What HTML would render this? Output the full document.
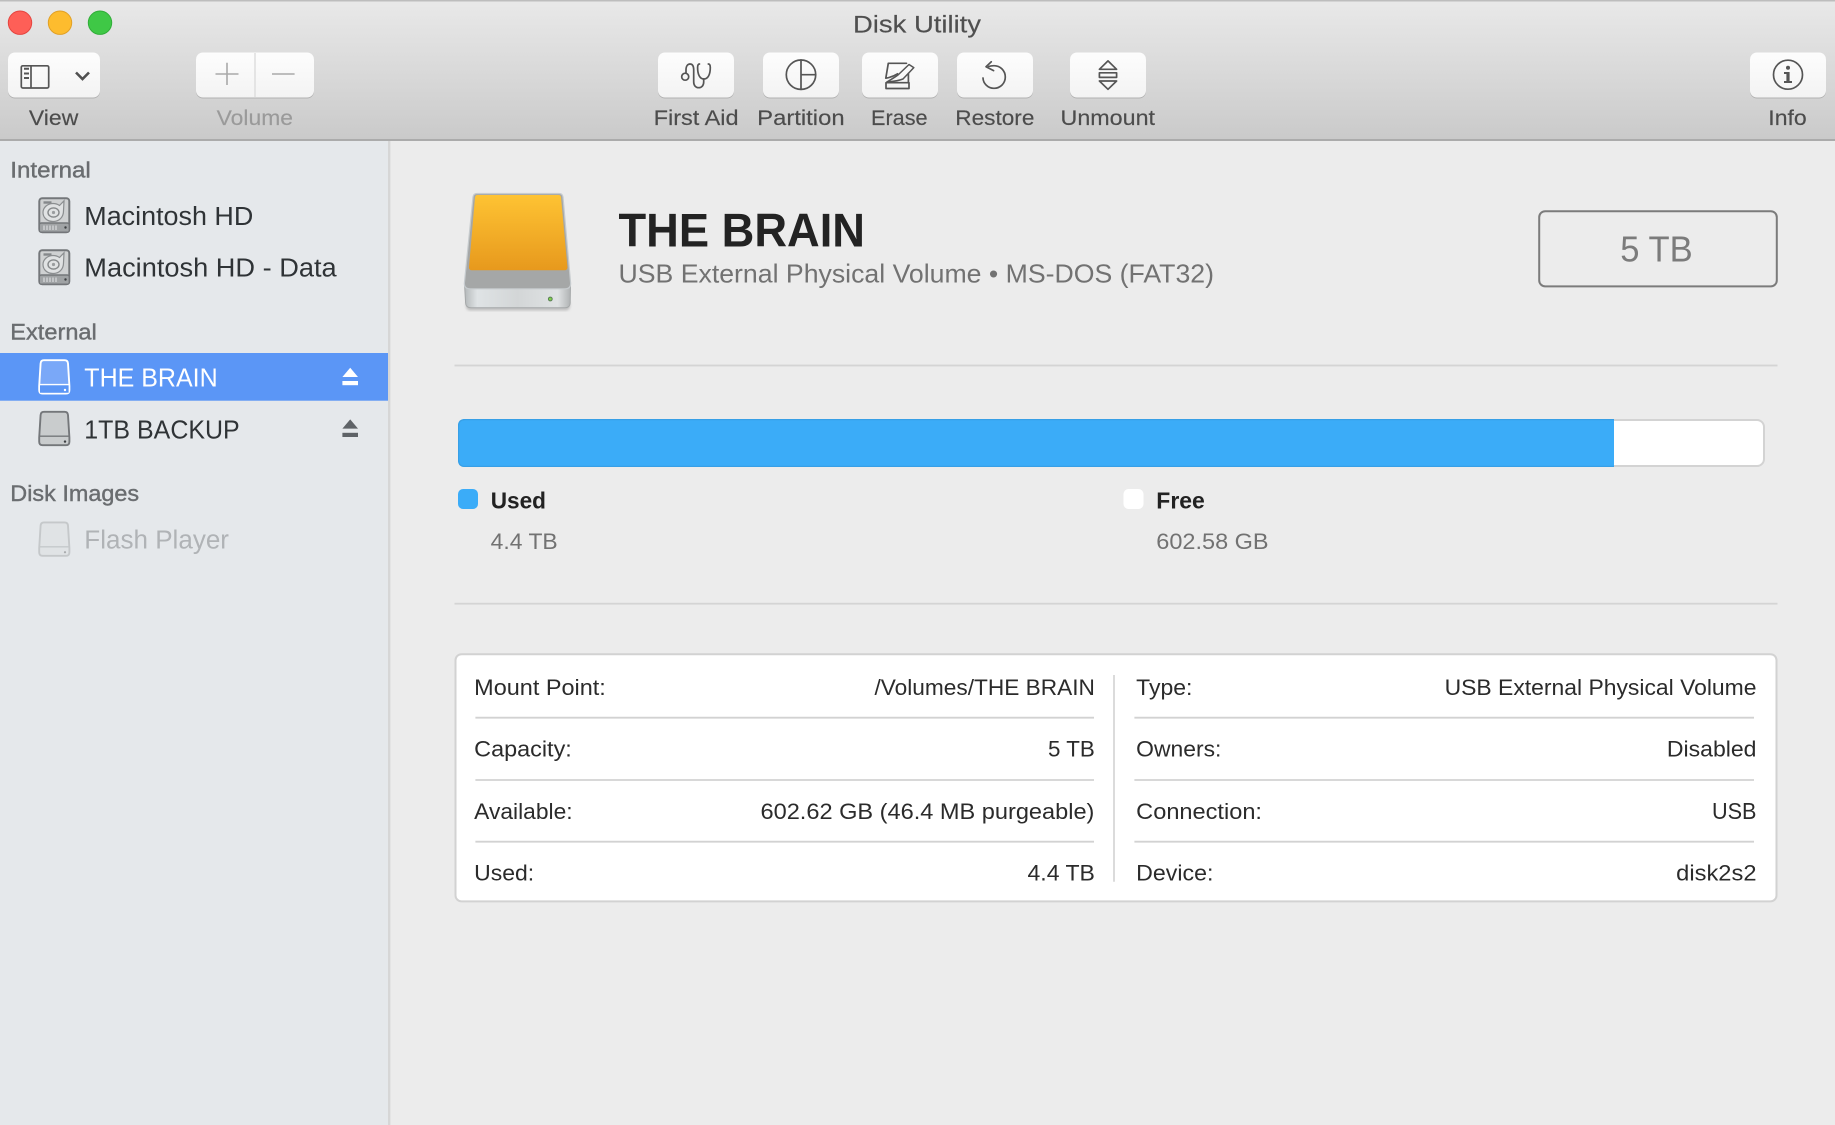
<!DOCTYPE html>
<html lang="en"><head><meta charset="utf-8"><title>Disk Utility</title>
<style>
html,body{margin:0;padding:0;width:1835px;height:1125px;overflow:hidden;background:#ececec}
svg{display:block}
text{font-family:"Liberation Sans",sans-serif;white-space:pre}
.tb{font-size:21.5px;fill:#4c4c4c;stroke:#4c4c4c;stroke-width:.15}
.grp{font-size:22px;fill:#6a6d70;stroke:#6a6d70;stroke-width:.4}
.it{font-size:25.5px;fill:#2f3336}
.row{font-size:22px;fill:#2b2b2b}
.ic{fill:none;stroke:#555;stroke-width:1.7;stroke-linejoin:round;stroke-linecap:round}
</style></head><body>
<svg width="1835" height="1125" viewBox="0 0 1835 1125" xmlns="http://www.w3.org/2000/svg">
<defs>
<linearGradient id="tbg" x1="0" y1="0" x2="0" y2="1"><stop offset="0" stop-color="#e9e9e9"/><stop offset="1" stop-color="#cacaca"/></linearGradient>
<linearGradient id="btn" x1="0" y1="0" x2="0" y2="1"><stop offset="0" stop-color="#fdfdfd"/><stop offset="1" stop-color="#f3f3f3"/></linearGradient>
<linearGradient id="org" x1="0" y1="0" x2="0" y2="1"><stop offset="0" stop-color="#fec333"/><stop offset="1" stop-color="#e7991d"/></linearGradient>
<linearGradient id="sil" x1="0" y1="0" x2="1" y2="0"><stop offset="0" stop-color="#b4b8b9"/><stop offset=".12" stop-color="#dfe3e5"/><stop offset=".5" stop-color="#d3d6d7"/><stop offset=".88" stop-color="#dfe2e3"/><stop offset="1" stop-color="#b0b3b4"/></linearGradient>
<filter id="soft" x="-10%" y="-10%" width="120%" height="120%"><feGaussianBlur stdDeviation="1.2"/></filter>
</defs>

<rect width="1835" height="1125" fill="#ececec"/>
<!-- toolbar -->
<rect width="1835" height="140" fill="url(#tbg)"/>
<rect width="1835" height="1.5" fill="#bdbdbd"/>
<rect y="139" width="1835" height="2" fill="#ababab"/>
<circle cx="20" cy="22.7" r="11.7" fill="#fe5f57" stroke="#e5443f" stroke-width="1"/>
<circle cx="60" cy="22.7" r="11.7" fill="#fdbc2e" stroke="#e1a025" stroke-width="1"/>
<circle cx="100" cy="22.7" r="11.7" fill="#3fc846" stroke="#30ad38" stroke-width="1"/>
<text x="853" y="32.7" font-size="24" fill="#4f4f4f" stroke="#4f4f4f" stroke-width=".15" textLength="128" lengthAdjust="spacingAndGlyphs">Disk Utility</text>

<!-- buttons -->
<g fill="#b1b1b1">
<rect x="8" y="53" width="92" height="45.5" rx="7"/><rect x="196" y="53" width="118" height="45.5" rx="7"/>
<rect x="658" y="53" width="76" height="45.5" rx="7"/><rect x="763" y="53" width="76" height="45.5" rx="7"/>
<rect x="862" y="53" width="76" height="45.5" rx="7"/><rect x="957" y="53" width="76" height="45.5" rx="7"/>
<rect x="1070" y="53" width="76" height="45.5" rx="7"/><rect x="1750" y="53" width="76" height="45.5" rx="7"/>
</g>
<g fill="url(#btn)">
<rect x="8" y="52.5" width="92" height="45" rx="7"/><rect x="196" y="52.5" width="118" height="45" rx="7"/>
<rect x="658" y="52.5" width="76" height="45" rx="7"/><rect x="763" y="52.5" width="76" height="45" rx="7"/>
<rect x="862" y="52.5" width="76" height="45" rx="7"/><rect x="957" y="52.5" width="76" height="45" rx="7"/>
<rect x="1070" y="52.5" width="76" height="45" rx="7"/><rect x="1750" y="52.5" width="76" height="45" rx="7"/>
</g>
<rect x="254.3" y="53" width="1.4" height="44" fill="#dcdcdc"/>

<!-- view icon -->
<rect x="21.3" y="65.8" width="27.4" height="22.2" rx="1.5" fill="none" stroke="#555" stroke-width="1.7"/>
<path d="M31 65.8V88" stroke="#555" stroke-width="1.7" fill="none"/>
<path d="M24 68.8h5M24 73.5h5M24 78h5" stroke="#555" stroke-width="2" fill="none"/>
<path d="M76 72.5l6.5 6.5 6.5-6.5" fill="none" stroke="#505050" stroke-width="2.6"/>
<!-- plus minus -->
<path d="M215.5 74H238.5M227 62.7V85M272 74H294.6" stroke="#a9a9a9" stroke-width="1.6" fill="none"/>
<!-- stethoscope -->
<g class="ic">
<circle cx="685.2" cy="76.7" r="3.5"/>
<path d="M686 73.2V70C686 66 687.8 64 690 64C692.2 64 693.6 66 693.7 69.5V82C693.7 85.5 695.8 87.7 698.7 87.7C701.6 87.7 703.7 85.5 703.7 82V79"/>
<path d="M699.5 64C698 64 697.6 65.4 697.6 67.5C697.6 74.5 699.8 79 703.9 79C708 79 710.3 74.5 710.3 67.5C710.3 65.4 710 64 708.3 64"/>
</g>
<!-- partition -->
<g class="ic"><circle cx="801" cy="74.7" r="14.7"/><path d="M801 60V89.4M801 74.7H815.7"/></g>
<!-- erase -->
<g class="ic">
<path d="M906.5 63.3H888.3L885.8 78.2C890 77.5 894 76 897.5 73.8"/>
<path d="M909 64.5L913.8 67.6L903 79C898 81 892 81.6 886.8 82C891 79.5 895.5 77 898.5 74.5Z" stroke-width="1.5"/>
<path d="M908.4 73.5V82.7M886 82.7H909V88.5H886Z"/>
</g>
<!-- restore -->
<g class="ic">
<path d="M988.5 66.5C990 66 992 65.7 994 65.7C1000.4 65.7 1005.3 70.8 1005.3 77C1005.3 83.2 1000.4 88.3 994 88.3C988 88.3 983.2 83.6 983 78"/>
<path d="M991.3 61.8L986 66.7L993.6 70.6"/>
</g>
<!-- unmount -->
<g class="ic">
<path d="M1108 60.9L1116.6 69.3H1099.4Z"/><rect x="1099.4" y="72.8" width="17.2" height="4.6"/><path d="M1099.4 81H1116.6L1108 89.3Z"/>
</g>
<!-- info -->
<circle cx="1788" cy="74.7" r="14.5" fill="none" stroke="#555" stroke-width="1.7"/>
<circle cx="1788" cy="67.8" r="2" fill="#555"/>
<path d="M1784 72H1789.6V81H1792V83H1784V81H1786.4V74H1784Z" fill="#555"/>

<g class="tb">
<text x="28.9" y="125" textLength="49.4" lengthAdjust="spacingAndGlyphs">View</text>
<text x="216.7" y="125" textLength="76.3" lengthAdjust="spacingAndGlyphs" style="fill:#9a9a9a;stroke:#9a9a9a">Volume</text>
<text x="653.6" y="125" textLength="85" lengthAdjust="spacingAndGlyphs">First Aid</text>
<text x="757.2" y="125" textLength="87.4" lengthAdjust="spacingAndGlyphs">Partition</text>
<text x="871" y="125" textLength="56.6" lengthAdjust="spacingAndGlyphs">Erase</text>
<text x="955.3" y="125" textLength="79.1" lengthAdjust="spacingAndGlyphs">Restore</text>
<text x="1060.5" y="125" textLength="94.5" lengthAdjust="spacingAndGlyphs">Unmount</text>
<text x="1768.3" y="125" textLength="38.4" lengthAdjust="spacingAndGlyphs">Info</text>
</g>

<!-- sidebar -->
<rect y="141" width="388" height="984" fill="#e5e8eb"/>
<rect x="388" y="141" width="2.4" height="984" fill="#d6d6d6"/>
<text class="grp" x="10.3" y="177.3" textLength="80.5" lengthAdjust="spacingAndGlyphs">Internal</text>
<text class="grp" x="10.3" y="339.3" textLength="86.5" lengthAdjust="spacingAndGlyphs">External</text>
<text class="grp" x="10.3" y="501" textLength="128.8" lengthAdjust="spacingAndGlyphs">Disk Images</text>

<rect y="353" width="388" height="47.7" fill="#5b96f6"/>

<!-- HD icons -->
<g>
<rect x="39.3" y="198.2" width="30" height="34" rx="3" fill="#cfd1d2" stroke="#74777a" stroke-width="2"/>
<rect x="39.3" y="223" width="30" height="9.2" rx="2" fill="#a0a3a5" stroke="#74777a" stroke-width="1.4"/>
<path d="M44 225.5v4.5M47 225.5v4.5M50 225.5v4.5M53 225.5v4.5M56 225.5v4.5" stroke="#d6d8d9" stroke-width="1.3"/>
<circle cx="65.5" cy="227.5" r="1.2" fill="#3c3f42"/>
<path d="M43.5 202.5h8" stroke="#85888b" stroke-width="2.4"/>
<path d="M53 203.5C55.5 203.5 58 204.4 59.5 205.5L64 200.8L63.5 211C63.5 217.5 58.8 221.5 53 221.5C47 221.5 43 217.5 43 212.5C43 207.5 47.5 203.5 53 203.5Z" fill="#e0e2e3" stroke="#8b8e90" stroke-width="1.2"/>
<ellipse cx="53.5" cy="212.5" rx="5.5" ry="4.6" fill="none" stroke="#85888a" stroke-width="1.4"/>
<circle cx="53.5" cy="212.5" r="1.6" fill="#9a9d9f"/>
</g>
<g transform="translate(0 52)">
<rect x="39.3" y="198.2" width="30" height="34" rx="3" fill="#cfd1d2" stroke="#74777a" stroke-width="2"/>
<rect x="39.3" y="223" width="30" height="9.2" rx="2" fill="#a0a3a5" stroke="#74777a" stroke-width="1.4"/>
<path d="M44 225.5v4.5M47 225.5v4.5M50 225.5v4.5M53 225.5v4.5M56 225.5v4.5" stroke="#d6d8d9" stroke-width="1.3"/>
<circle cx="65.5" cy="227.5" r="1.2" fill="#3c3f42"/>
<path d="M43.5 202.5h8" stroke="#85888b" stroke-width="2.4"/>
<path d="M53 203.5C55.5 203.5 58 204.4 59.5 205.5L64 200.8L63.5 211C63.5 217.5 58.8 221.5 53 221.5C47 221.5 43 217.5 43 212.5C43 207.5 47.5 203.5 53 203.5Z" fill="#e0e2e3" stroke="#8b8e90" stroke-width="1.2"/>
<ellipse cx="53.5" cy="212.5" rx="5.5" ry="4.6" fill="none" stroke="#85888a" stroke-width="1.4"/>
<circle cx="53.5" cy="212.5" r="1.6" fill="#9a9d9f"/>
</g>
<!-- external icons -->
<g>
<path d="M44 360.2H64.5Q67.8 360.2 68 363.5L69.4 386V390Q69.4 393.6 66 393.6H42.6Q39.2 393.6 39.2 390V386L40.6 363.5Q40.8 360.2 44 360.2Z" fill="#7aa8f8" stroke="#fff" stroke-width="1.9"/>
<path d="M40 385.3h28.6v7.4h-28.6z" fill="#5b96f6"/>
<path d="M39.5 384.6H69" stroke="#fff" stroke-width="1.4"/>
<circle cx="65" cy="390" r="1.2" fill="#fff"/>
</g>
<g>
<path d="M44 411.8H64.5Q67.8 411.8 68 415.1L69.4 437.6V441.6Q69.4 445.2 66 445.2H42.6Q39.2 445.2 39.2 441.6V437.6L40.6 415.1Q40.8 411.8 44 411.8Z" fill="#c9cccd" stroke="#74777a" stroke-width="1.9"/>
<path d="M39.5 436.2H69" stroke="#74777a" stroke-width="1.4"/>
<circle cx="65" cy="441.6" r="1.2" fill="#3c3f42"/>
</g>
<g>
<path d="M44 522.4H64.5Q67.8 522.4 68 525.7L69.4 548.2V552.2Q69.4 555.8 66 555.8H42.6Q39.2 555.8 39.2 552.2V548.2L40.6 525.7Q40.8 522.4 44 522.4Z" fill="#e0e3e5" stroke="#c5c8ca" stroke-width="1.9"/>
<path d="M39.5 546.8H69" stroke="#c5c8ca" stroke-width="1.4"/>
<circle cx="65" cy="552.2" r="1.1" fill="#a8abad"/>
</g>

<text class="it" x="84.3" y="225" textLength="169" lengthAdjust="spacingAndGlyphs">Macintosh HD</text>
<text class="it" x="84.3" y="276.7" textLength="252.4" lengthAdjust="spacingAndGlyphs">Macintosh HD - Data</text>
<text class="it" x="84.3" y="386.7" textLength="133.4" lengthAdjust="spacingAndGlyphs" style="fill:#fff">THE BRAIN</text>
<text class="it" x="84.3" y="438.3" textLength="155.4" lengthAdjust="spacingAndGlyphs">1TB BACKUP</text>
<text class="it" x="84.3" y="548.3" textLength="144.7" lengthAdjust="spacingAndGlyphs" style="fill:#b0b3b6">Flash Player</text>

<!-- eject -->
<path d="M350.2 367.8L358 377H342.4Z" fill="#fff"/><rect x="342.4" y="381" width="15.6" height="4.2" fill="#fff"/>
<path d="M350.2 419.4L358 428.6H342.4Z" fill="#5f6367"/><rect x="342.4" y="432.8" width="15.6" height="4.2" fill="#5f6367"/>

<!-- big drive -->
<rect x="466" y="300" width="104" height="10.5" rx="4" fill="#9a9a9a" opacity=".55" filter="url(#soft)"/>
<path d="M465.6 303Q465.8 307.6 471 307.8H565Q570 307.6 570.2 303L570.5 284H464.5Z" fill="url(#sil)" stroke="#a5a8a9" stroke-width="1"/>
<path d="M477 193.5H559Q562.5 193.5 563 197L570.6 283Q571 288.8 565 288.8H470Q464 288.8 464.4 283L473 197Q473.5 193.5 477 193.5Z" fill="#a5a7a7" stroke="#c6cbce" stroke-width="1.2"/>
<path d="M477.5 195H558.5Q560.8 195 561 197.5L567.4 267Q567.6 270.3 564.5 270.3H471.8Q468.7 270.3 469 267L475 197.5Q475.3 195 477.5 195Z" fill="url(#org)"/>
<circle cx="550.3" cy="299" r="1.9" fill="#7fd04c" stroke="#5b7f55" stroke-width="1"/>

<text x="618.5" y="246.7" font-size="47.5" font-weight="700" fill="#232323" textLength="246.5" lengthAdjust="spacingAndGlyphs">THE BRAIN</text>
<text x="618.5" y="282.7" font-size="26" fill="#727272" textLength="595.5" lengthAdjust="spacingAndGlyphs">USB External Physical Volume • MS-DOS (FAT32)</text>

<rect x="1539.2" y="211.2" width="237.6" height="75.2" rx="6" fill="none" stroke="#7b7b7b" stroke-width="2"/>
<text x="1620.3" y="261.7" font-size="36" fill="#7b7b7b" textLength="72.4" lengthAdjust="spacingAndGlyphs">5 TB</text>

<rect x="454.5" y="364.6" width="1323" height="1.8" fill="#d4d4d4"/>
<rect x="454.5" y="602.8" width="1323" height="1.8" fill="#d4d4d4"/>

<!-- bar -->
<rect x="459" y="420" width="1305" height="46" rx="7" fill="#fff" stroke="#d3d3d3" stroke-width="2"/>
<path d="M1614 419H465Q458 419 458 426V460Q458 467 465 467H1614Z" fill="#3bacf8"/>
<path d="M1614 419.6H465Q458.6 419.6 458.6 426V460Q458.6 466.4 465 466.4H1614" fill="none" stroke="#379fe6" stroke-width="1.2"/>

<rect x="458" y="489" width="20" height="20" rx="5" fill="#3bacf8"/>
<rect x="1123.5" y="489" width="20" height="20" rx="5" fill="#fff"/>
<text x="490.7" y="508.7" font-size="23" font-weight="700" fill="#222" textLength="55.3" lengthAdjust="spacingAndGlyphs">Used</text>
<text x="490.7" y="549" font-size="22.5" fill="#727272" textLength="67" lengthAdjust="spacingAndGlyphs">4.4 TB</text>
<text x="1156.3" y="508.7" font-size="23" font-weight="700" fill="#222" textLength="48.5" lengthAdjust="spacingAndGlyphs">Free</text>
<text x="1156.3" y="549" font-size="22.5" fill="#727272" textLength="112.3" lengthAdjust="spacingAndGlyphs">602.58 GB</text>

<!-- table -->
<rect x="455.5" y="654.2" width="1321" height="247.2" rx="6" fill="#fff" stroke="#d2d2d2" stroke-width="2"/>
<path d="M475.4 717.7H1094M475.4 780H1094M475.4 841.7H1094M1134.4 717.7H1754M1134.4 780H1754M1134.4 841.7H1754" stroke="#d2d2d2" stroke-width="1.8" fill="none"/>
<path d="M1114 675V881.7" stroke="#d2d2d2" stroke-width="1.6" fill="none"/>
<g class="row">
<text x="474.2" y="695" textLength="131.6" lengthAdjust="spacingAndGlyphs">Mount Point:</text>
<text x="874.5" y="695" textLength="220.4" lengthAdjust="spacingAndGlyphs">/Volumes/THE BRAIN</text>
<text x="474.2" y="756.7" textLength="97.6" lengthAdjust="spacingAndGlyphs">Capacity:</text>
<text x="1048" y="756.7" textLength="46.8" lengthAdjust="spacingAndGlyphs">5 TB</text>
<text x="474.2" y="819" textLength="98.4" lengthAdjust="spacingAndGlyphs">Available:</text>
<text x="760.5" y="819" textLength="333.9" lengthAdjust="spacingAndGlyphs">602.62 GB (46.4 MB purgeable)</text>
<text x="474.2" y="880.7" textLength="60" lengthAdjust="spacingAndGlyphs">Used:</text>
<text x="1027.5" y="880.7" textLength="67.4" lengthAdjust="spacingAndGlyphs">4.4 TB</text>
<text x="1136.2" y="695" textLength="56.2" lengthAdjust="spacingAndGlyphs">Type:</text>
<text x="1444.6" y="695" textLength="311.9" lengthAdjust="spacingAndGlyphs">USB External Physical Volume</text>
<text x="1136.2" y="756.7" textLength="85.2" lengthAdjust="spacingAndGlyphs">Owners:</text>
<text x="1666.9" y="756.7" textLength="89.6" lengthAdjust="spacingAndGlyphs">Disabled</text>
<text x="1136.2" y="819" textLength="125.8" lengthAdjust="spacingAndGlyphs">Connection:</text>
<text x="1712" y="819" font-size="23" style="font-size:23px" textLength="44.5" lengthAdjust="spacingAndGlyphs">USB</text>
<text x="1136.2" y="880.7" textLength="77.2" lengthAdjust="spacingAndGlyphs">Device:</text>
<text x="1676.2" y="880.7" textLength="80.3" lengthAdjust="spacingAndGlyphs">disk2s2</text>
</g>
</svg>
</body></html>
